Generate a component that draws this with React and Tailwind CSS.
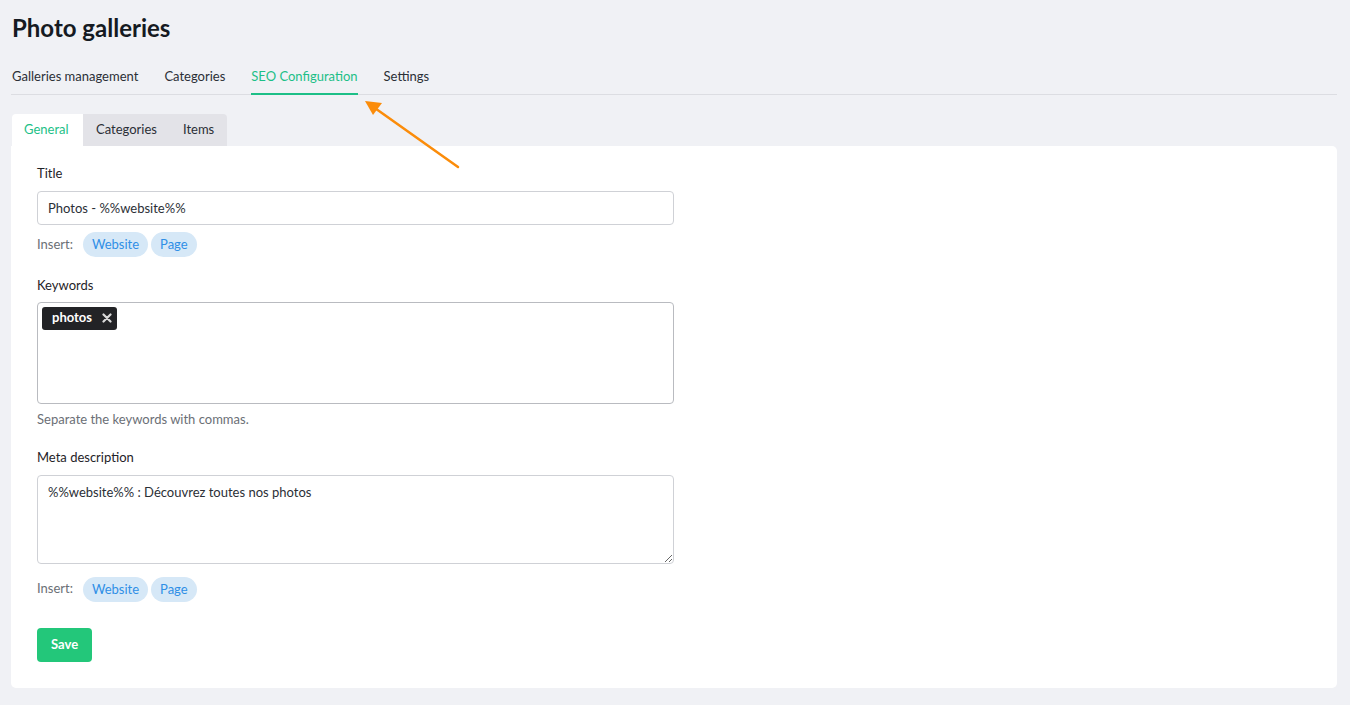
import React, { useState } from "react";

const Pill = ({ children }) => (
  <button className="h-[25px] px-[9px] rounded-full bg-[#d6e8f7] text-[#2f8fe6] text-[13px] leading-none">
    {children}
  </button>
);

const InsertRow = ({ top }) => (
  <div className={"flex items-center gap-[3px] text-[13px] " + top}>
    <span className="text-[#6b6f76] mr-[7px]">Insert:</span>
    <Pill>Website</Pill>
    <Pill>Page</Pill>
  </div>
);

const App = () => {
  const [title, setTitle] = useState("Photos - %%website%%");
  const [meta, setMeta] = useState("%%website%% : Découvrez toutes nos photos");
  const [keywords, setKeywords] = useState(["photos"]);

  const topTabs = ["Galleries management", "Categories", "SEO Configuration", "Settings"];
  const subTabs = ["General", "Categories", "Items"];

  return (
    <div
      className="relative min-h-[705px] bg-[#f0f1f5] px-[11px] pt-[13px] pb-[18px] text-[#1f2328]"
      style={{ fontFamily: "Lato, 'Noto Sans', sans-serif" }}
    >
      <h1 className="pl-[1px] text-[24px] font-bold leading-[30px] text-[#151a22]">Photo galleries</h1>

      <div className="mt-[24px] mr-[2px] flex gap-[26px] border-b border-[#dcdde2] pl-[1px] text-[13px]">
        {topTabs.map((t) => (
          <div
            key={t}
            className={
              t === "SEO Configuration"
                ? "pb-[6px] border-b-2 border-[#1dbf87] -mb-[1px] text-[#1dbf87]"
                : "pb-[7px] text-[#2b2f36]"
            }
          >
            {t}
          </div>
        ))}
      </div>

      <div className="mt-[19px] flex pl-[1px]">
        {subTabs.map((t, i) => (
          <div
            key={t}
            className={
              "h-[32px] flex items-center text-[13px] " +
              (i === 0
                ? "px-[12px] w-[71px] bg-white rounded-tl-[4px] text-[#1dbf87]"
                : i === 1
                ? "pl-[13px] pr-[13px] bg-[#e3e3e8] text-[#2b2f36]"
                : "pl-[13px] pr-[13px] bg-[#e3e3e8] rounded-tr-[4px] text-[#2b2f36]")
            }
          >
            {t}
          </div>
        ))}
      </div>

      <div className="mr-[2px] rounded-b-[5px] rounded-tr-[5px] bg-white pl-[26px] pt-[18px] pb-[26px]">
        <div className="w-[637px]">
          <label className="block text-[13px] text-[#1f2328]">Title</label>
          <input
            value={title}
            onChange={(e) => setTitle(e.target.value)}
            className="mt-[8px] block h-[34px] w-full rounded-[4px] border border-[#cfd1d6] px-[10px] text-[13px] text-[#2b2f36] outline-none"
          />
          <InsertRow top="mt-[7px]" />

          <label className="mt-[19px] block text-[13px]">Keywords</label>
          <div className="mt-[6px] h-[102px] w-full rounded-[4px] border border-[#b9bbc0] p-[4px]">
            <div className="flex flex-wrap gap-[4px]">
              {keywords.map((k) => (
                <span
                  key={k}
                  className="flex h-[23px] items-center gap-[10px] rounded-[3px] bg-[#222326] pl-[10px] pr-[5px] text-[13px] font-bold text-white"
                >
                  {k}
                  <button
                    onClick={() => setKeywords(keywords.filter((x) => x !== k))}
                    className="text-[#d9d9d9]"
                  >
                    <svg width="10" height="10" viewBox="0 0 10 10">
                      <path d="M1.5 1.5 L8.5 8.5 M8.5 1.5 L1.5 8.5" stroke="currentColor" strokeWidth="2.2" strokeLinecap="round" />
                    </svg>
                  </button>
                </span>
              ))}
            </div>
          </div>
          <p className="mt-[6px] text-[13px] text-[#6b6f76]">Separate the keywords with commas.</p>

          <label className="mt-[19px] block text-[13px]">Meta description</label>
          <textarea
            value={meta}
            onChange={(e) => setMeta(e.target.value)}
            className="mt-[7px] block h-[89px] w-full rounded-[4px] border border-[#cfd1d6] px-[10px] py-[7px] text-[13px] text-[#2b2f36] outline-none"
          />
          <InsertRow top="mt-[13px]" />

          <button className="mt-[26px] h-[34px] rounded-[4px] bg-[#23c77a] px-[14px] text-[13px] font-bold text-white">
            Save
          </button>
        </div>
      </div>

      {/* annotation arrow */}
      <svg className="pointer-events-none absolute left-[360px] top-[95px]" width="105" height="80" viewBox="0 0 105 80">
        <line x1="98" y1="72" x2="12" y2="11" stroke="#fb8c0a" strokeWidth="2.5" strokeLinecap="round" />
        <path d="M5 6 L22 8 L13 20 Z" fill="#fb8c0a" />
      </svg>
    </div>
  );
};

export default App;
